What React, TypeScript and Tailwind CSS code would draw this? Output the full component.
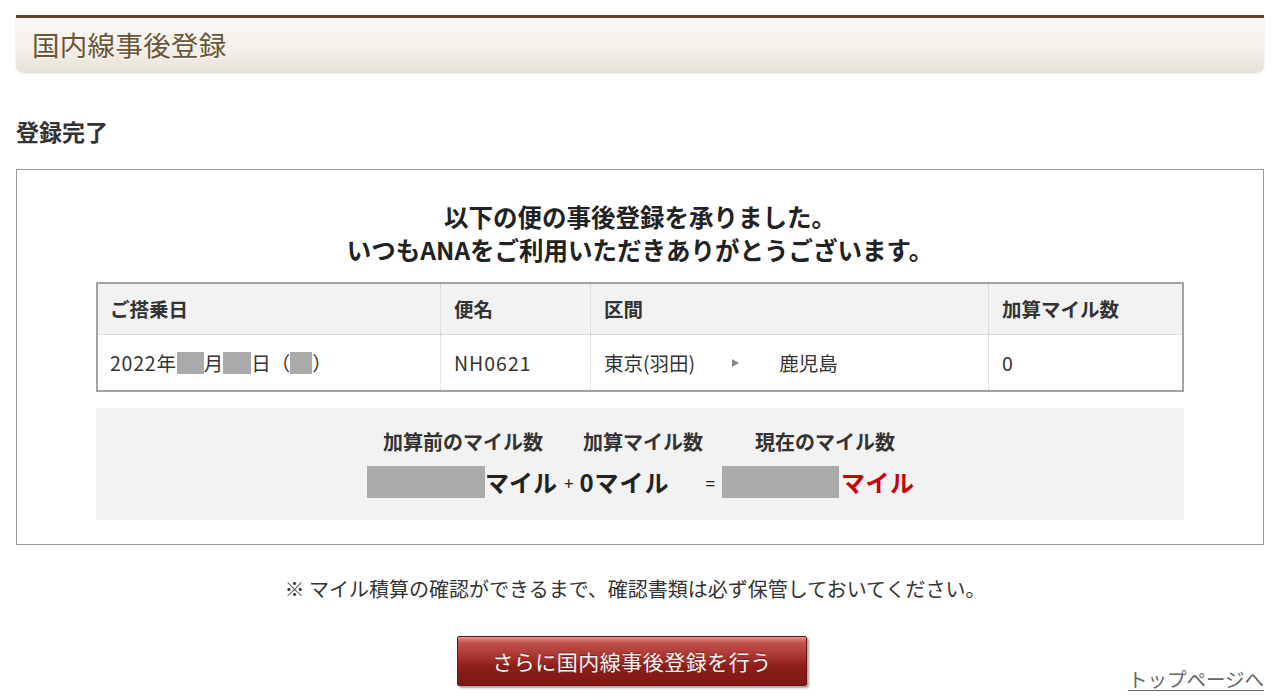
import React from "react";

const Redact = ({ w, h }: { w: number; h: number }) => (
  <span className="inline-block bg-[#aaaaaa] align-middle" style={{ width: w, height: h }} />
);

export default function App() {
  return (
    <div className="w-[1280px] h-[700px] overflow-hidden bg-white px-4 pt-[15px] text-[#333] font-['Noto_Sans_CJK_JP','Noto_Sans',sans-serif]">
      {/* Header bar */}
      <div className="h-[57px] border-t-[3px] border-[#5e4529] rounded-b-[7px] bg-[linear-gradient(to_bottom,#fbf9f5,#f3efe8_60%,#e9e3d8)] shadow-[0_1px_2px_rgba(0,0,0,0.15)] flex items-center pl-4">
        <h1 className="text-[27.5px] leading-none text-[#6a5536] tracking-[0.3px] [text-shadow:0_1px_0_#fff]">国内線事後登録</h1>
      </div>

      <h2 className="mt-[44px] text-[23px] leading-[30px] font-bold text-[#333]">登録完了</h2>

      {/* Main box */}
      <div className="mt-[23px] border border-[#999] px-[79px] pt-[30px] pb-[24px]">
        <p className="text-center text-[24.5px] leading-[33px] font-bold text-[#222]">
          以下の便の事後登録を承りました。
          <br />
          いつもANAをご利用いただきありがとうございます。
        </p>

        {/* Flight table */}
        <div className="mt-[16px] border-2 border-[#a3a3a3] text-[19.5px]">
          <div className="flex h-[51px] bg-[#f2f2f2] border-b border-[#dcdcdc] font-bold items-center">
            <div className="w-[342px] pl-[12px]">ご搭乗日</div>
            <div className="w-[150px] h-full flex items-center pl-[13px] border-l border-dotted border-[#c8c8c8]">便名</div>
            <div className="w-[398px] h-full flex items-center pl-[13px] border-l border-dotted border-[#c8c8c8]">区間</div>
            <div className="flex-1 h-full flex items-center pl-[13px] border-l border-dotted border-[#c8c8c8]">加算マイル数</div>
          </div>
          <div className="flex h-[55px] items-center">
            <div className="w-[342px] pl-[12px] flex items-center">
              <span className="tracking-[0.8px]">2022年</span>
              <Redact w={27} h={22} />
              <span>月</span>
              <Redact w={28} h={22} />
              <span>日（</span>
              <Redact w={22} h={22} />
              <span>）</span>
            </div>
            <div className="w-[150px] h-full flex items-center pl-[13px] border-l border-dotted border-[#c8c8c8] tracking-[1px]">NH0621</div>
            <div className="w-[398px] h-full flex items-center pl-[13px] border-l border-dotted border-[#c8c8c8]">
              <span>東京(羽田)</span>
              <span className="ml-[37px] inline-block w-0 h-0 border-y-[4px] border-y-transparent border-l-[7px] border-l-[#888]" />
              <span className="ml-[40px]">鹿児島</span>
            </div>
            <div className="flex-1 h-full flex items-center pl-[13px] border-l border-dotted border-[#c8c8c8]">0</div>
          </div>
        </div>

        {/* Summary */}
        <div className="mt-[16px] h-[112px] bg-[#f2f2f2] pt-[20px]">
          <div className="flex items-center pl-[287px] text-[20px] leading-[28px] font-bold text-[#333]">
            <span>加算前のマイル数</span>
            <span className="ml-[40px]">加算マイル数</span>
            <span className="ml-[52px]">現在のマイル数</span>
          </div>
          <div className="mt-[10px] flex items-center pl-[271px] h-[32px] font-bold text-[24px] leading-none text-[#222]">
            <Redact w={118} h={32} />
            <span>マイル</span>
            <span className="ml-[7px] text-[17px] font-normal">+</span>
            <span className="ml-[6px] tracking-[1px]">0マイル</span>
            <span className="ml-[36px] text-[17px] font-normal">=</span>
            <span className="ml-[7px]" />
            <Redact w={117} h={32} />
            <span className="ml-[2px] text-[#c8000a] tracking-[0.5px]">マイル</span>
          </div>
        </div>
      </div>

      <p className="mt-[30px] text-center text-[20px] leading-[28px] text-[#333] pr-[10px]">
        ※ マイル積算の確認ができるまで、確認書類は必ず保管しておいてください。
      </p>

      <div className="relative mt-[33px] h-[52px]">
        <div className="ml-[441px] w-[350px] h-[50px] rounded-[2px] border border-[#6f1511] bg-[linear-gradient(to_bottom,#e29995_0%,#c0514c_12%,#a5302b_45%,#8d1f1a_60%,#7e1813_100%)] shadow-[2px_2px_2px_rgba(0,0,0,0.35)] flex items-center justify-center">
          <span className="text-[#fbf4f4] text-[21px] leading-none tracking-[0.5px] [text-shadow:0_-1px_0_rgba(0,0,0,0.3)]">さらに国内線事後登録を行う</span>
        </div>
        <a className="absolute right-0 top-[31px] text-[19.5px] leading-[24px] text-[#666] underline underline-offset-[3px]">トップページへ</a>
      </div>
    </div>
  );
}
